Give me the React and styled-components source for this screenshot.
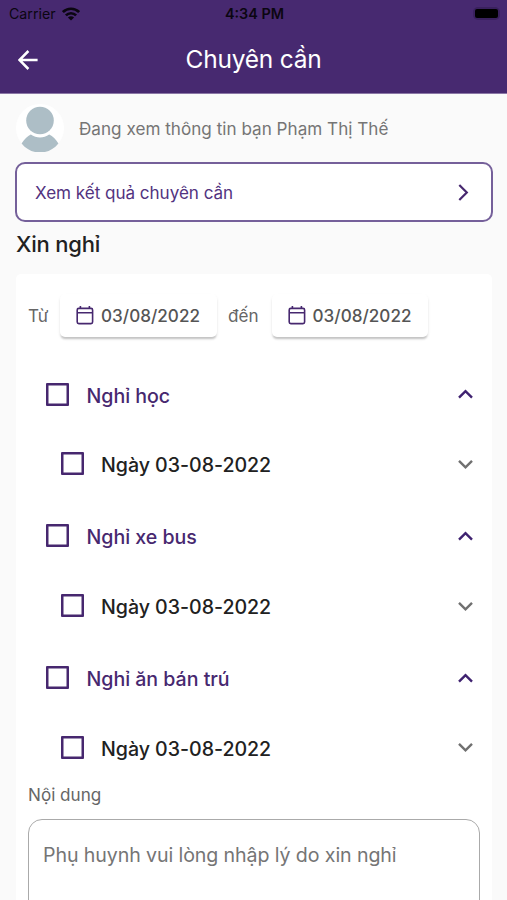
import React, { useState } from 'react'
import styled, { createGlobalStyle } from "styled-components";

const groupList = [
    { id: 1, name: 'Nghỉ học', days: ['Ngày 03-08-2022'] },
    { id: 2, name: 'Nghỉ xe bus', days: ['Ngày 03-08-2022'] },
    { id: 3, name: 'Nghỉ ăn bán trú', days: ['Ngày 03-08-2022'] },
];

const WifiIcon = () => (
    <svg width="18" height="14" viewBox="0 0 18 14">
        <g fill="none" stroke="#0b0611" strokeWidth="2.7">
            <path d="M0.9 5.1C5.4 0.6 12.6 0.6 17.1 5.1" />
            <path d="M3.9 8.4C6.8 5.5 11.2 5.5 14.1 8.4" />
        </g>
        <path d="M9 13.6L5.9 10.5C7.6 8.9 10.4 8.9 12.1 10.5Z" fill="#0b0611" />
    </svg>
);

const BackIcon = () => (
    <svg width="20" height="20" viewBox="0 0 20 20" fill="none" stroke="#fff" strokeWidth="2.5">
        <path d="M19.6 10H2M10.4 1L1.4 10L10.4 19" />
    </svg>
);

const AvatarIcon = () => (
    <svg width="48" height="48" viewBox="0 0 48 48">
        <circle cx="24" cy="24" r="24" fill="#fff" />
        <circle cx="24" cy="16.5" r="13.8" fill="#adbec6" />
        <path d="M5.6 39.4C8.4 35.2 11.4 32.3 14.8 30.6C20.4 34.4 27.6 34.4 33.2 30.6C36.8 32.3 39.8 35.2 42.4 39.4C32.6 51.6 15.4 51.6 5.6 39.4Z" fill="#adbec6" />
    </svg>
);

const CalendarIcon = () => (
    <svg width="18" height="19" viewBox="0 0 18 19" fill="none" stroke="#47286f" strokeWidth="1.6">
        <rect x="1.2" y="2.4" width="15.4" height="15.2" rx="1.6" />
        <path d="M1 6.8H17M4.4 0V2.6M13.4 0V2.6" />
    </svg>
);

const RightIcon = () => (
    <svg width="11" height="17" viewBox="0 0 11 17" fill="none" stroke="#47286f" strokeWidth="2.2">
        <path d="M1.3 1L8.8 8.5L1.3 16" />
    </svg>
);

const ToggleIcon = ({ open }) => (
    <svg width="15" height="10" viewBox="0 0 15 10" fill="none" stroke={open ? "#3f2270" : "#707070"} strokeWidth="2.4">
        <path d={open ? "M1 8.6L7.5 2.1L14 8.6" : "M1 1.8L7.5 8.3L14 1.8"} />
    </svg>
);

const App = () => {
    const [checked, setChecked] = useState({});
    const [reason, setReason] = useState("");

    const onToggle = (key) => {
        setChecked({ ...checked, [key]: !checked[key] })
    };

    return (
        <Container>
            <GlobalStyle />
            <Header>
                <StatusBar>
                    <Carrier>Carrier <WifiIcon /></Carrier>
                    <Clock>4:34 PM</Clock>
                    <BatteryBox><Battery /></BatteryBox>
                </StatusBar>
                <AppBar>
                    <BackButton><BackIcon /></BackButton>
                    <Title>Chuyên cần</Title>
                </AppBar>
            </Header>
            <Content>
                <Student>
                    <AvatarIcon />
                    <StudentText>Đang xem thông tin bạn Phạm Thị Thế</StudentText>
                </Student>
                <ResultButton>
                    <span>Xem kết quả chuyên cần</span>
                    <RightIcon />
                </ResultButton>
                <SectionTitle>Xin nghỉ</SectionTitle>
                <Card>
                    <DateRow>
                        <DateLabel $width={32}>Từ</DateLabel>
                        <DateButton><CalendarIcon />03/08/2022</DateButton>
                        <DateLabel $width={55} $left={11.5}>đến</DateLabel>
                        <DateButton><CalendarIcon />03/08/2022</DateButton>
                    </DateRow>
                    <GroupList>
                        {groupList.map(g => (
                            <Group key={g.id}>
                                <Row>
                                    <CheckBox $checked={checked[g.id]} onClick={() => onToggle(g.id)} />
                                    <RowText $main>{g.name}</RowText>
                                    <ToggleIcon open />
                                </Row>
                                {g.days.map(d => (
                                    <Row key={d} $sub>
                                        <CheckBox $checked={checked[g.id + d]} onClick={() => onToggle(g.id + d)} />
                                        <RowText>{d}</RowText>
                                        <ToggleIcon />
                                    </Row>
                                ))}
                            </Group>
                        ))}
                    </GroupList>
                    <FieldLabel>Nội dung</FieldLabel>
                    <Reason
                        value={reason}
                        onChange={e => setReason(e.target.value)}
                        placeholder="Phụ huynh vui lòng nhập lý do xin nghỉ"
                    />
                </Card>
            </Content>
        </Container>
    );
};

const GlobalStyle = createGlobalStyle`
  * {
    box-sizing: border-box;
  }
  body {
    margin: 0;
    background: #fafafa;
  }
  svg {
    display: block;
    flex-shrink: 0;
  }
`;

const Container = styled.div`
  height: 900px;
  overflow: hidden;
  display: flex;
  flex-direction: column;
  background: #fafafa;
  font-family: Inter, Roboto, sans-serif;
`;

const Header = styled.div`
  height: 94px;
  flex-shrink: 0;
  background: #472970;
  border-bottom: 1px solid #8b77a6;
`;

const StatusBar = styled.div`
  height: 27px;
  display: grid;
  grid-template-columns: 1fr auto 1fr;
  align-items: center;
  padding: 0 7px 0 9px;
  color: #0b0611;
`;

const Carrier = styled.div`
  display: flex;
  align-items: center;
  gap: 6px;
  font-size: 14.2px;
`;

const Clock = styled.div`
  font-size: 14.4px;
  font-weight: 600;
`;

const BatteryBox = styled.div`
  justify-self: end;
  padding: 2px;
  border-radius: 5px;
  background: #3a215e;
`;

const Battery = styled.div`
  width: 23px;
  height: 9px;
  border-radius: 2px;
  background: #000;
`;

const AppBar = styled.div`
  height: 64px;
  display: grid;
  grid-template-columns: 60px 1fr 60px;
  align-items: center;
`;

const BackButton = styled.button`
  border: none;
  background: none;
  padding: 1px 0 0 18px;
`;

const Title = styled.div`
  color: #fff;
  font-size: 24.5px;
  text-align: center;
  letter-spacing: -0.24px;
`;

const Content = styled.div`
  flex: 1;
  display: flex;
  flex-direction: column;
  padding: 10px 15px 0 16px;
`;

const Student = styled.div`
  height: 48px;
  display: flex;
  align-items: center;
  gap: 15px;
`;

const StudentText = styled.div`
  color: #757575;
  font-size: 17.1px;
  letter-spacing: 0.02px;
`;

const ResultButton = styled.button`
  height: 60px;
  margin: 10px -1px 0 -1px;
  padding: 0 22px 0 18px;
  display: flex;
  align-items: center;
  justify-content: space-between;
  border: 2px solid #75609a;
  border-radius: 10px;
  background: #fff;
  color: #523380;
  font-family: inherit;
  font-size: 17.1px;
  letter-spacing: -0.04px;
`;

const SectionTitle = styled.div`
  height: 52px;
  line-height: 45px;
  color: #212121;
  font-size: 22px;
  font-weight: 450;
  letter-spacing: -0.2px;
`;

const Card = styled.div`
  flex: 1;
  display: flex;
  flex-direction: column;
  padding: 20px 12px 0;
  border-radius: 5px 5px 0 0;
  background: #fff;
`;

const DateRow = styled.div`
  display: flex;
  align-items: center;
  height: 43px;
`;

const DateLabel = styled.div`
  width: ${p => p.$width}px;
  padding-left: ${p => p.$left || 0}px;
  color: #666;
  font-size: 17.1px;
`;

const DateButton = styled.button`
  width: 156.5px;
  height: 43px;
  padding: 0 0 0 16px;
  display: flex;
  align-items: center;
  gap: 7px;
  border: none;
  border-radius: 5px;
  background: #fff;
  box-shadow: 0 3px 2px -1px rgba(0, 0, 0, 0.16), 0 2px 3px rgba(0, 0, 0, 0.1);
  color: #555;
  font-family: inherit;
  font-size: 17.1px;
  font-weight: 500;
  letter-spacing: 0.02px;
`;

const GroupList = styled.div`
  display: flex;
  flex-direction: column;
  gap: 2.4px;
  padding-top: 22.6px;
`;

const Group = styled.div`
  display: flex;
  flex-direction: column;
`;

const Row = styled.div`
  height: 69.6px;
  display: flex;
  align-items: center;
  gap: 17.5px;
  padding: 0 7px 0 ${p => p.$sub ? 32.5 : 18}px;
`;

const CheckBox = styled.button`
  width: 23px;
  height: 23px;
  padding: 0;
  border: none;
  border-radius: 1px;
  box-shadow: inset 0 0 0 2.5px #47286f;
  background: ${p => p.$checked ? '#47286f' : '#fff'};
`;

const RowText = styled.div`
  flex: 1;
  padding-top: 3px;
  color: ${p => p.$main ? '#47286f' : '#212121'};
  font-size: 19.6px;
  font-weight: 500;
  letter-spacing: -0.03px;
`;

const FieldLabel = styled.div`
  height: 37px;
  line-height: 26px;
  color: #666;
  font-size: 17.1px;
`;

const Reason = styled.textarea`
  height: 140px;
  flex-shrink: 0;
  padding: 23px 14px;
  border: 1.5px solid #aaa;
  border-radius: 14px;
  resize: none;
  outline: none;
  font-family: inherit;
  font-size: 19.6px;
  letter-spacing: -0.1px;
  &::placeholder {
    color: #757575;
  }
`;

export default App;
